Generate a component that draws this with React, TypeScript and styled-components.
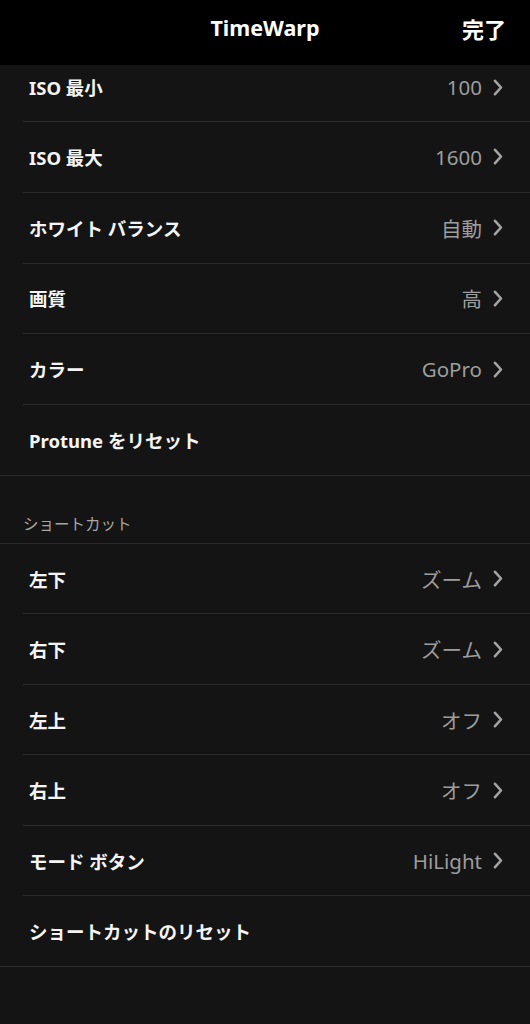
import React from "react";
import styled, { createGlobalStyle } from "styled-components";

const Global = createGlobalStyle`
  html, body { margin: 0; padding: 0; background: #141414; }
  body { font-family: "Noto Sans", "Noto Sans CJK JP", sans-serif; -webkit-font-smoothing: antialiased; }
`;

const Page = styled.div`
  width: 530px;
  min-height: 1024px;
  background: #141414;
  display: flex;
  flex-direction: column;
`;

const Header = styled.header`
  height: 65px;
  background: #000;
  display: grid;
  grid-template-columns: 1fr auto 1fr;
  align-items: center;
  padding: 0 24px 10px;
  box-sizing: border-box;
  color: #fff;
`;

const Title = styled.h1`
  grid-column: 2;
  margin: 0;
  font-size: 21.5px;
  font-weight: 700;
`;

const Done = styled.button`
  grid-column: 3;
  justify-self: end;
  background: none;
  border: none;
  padding: 0;
  color: #fff;
  font-family: inherit;
  font-size: 22px;
  font-weight: 700;
`;

const List = styled.div`
  display: flex;
  flex-direction: column;
`;

const Row = styled.div<{ $clipped?: boolean; $full?: boolean; $height: number }>`
  height: ${(p) => (p.$clipped ? "57px" : `${p.$height}px`)};
  flex-shrink: 0;
  padding-bottom: ${(p) => (p.$clipped ? "12px" : "0")};
  box-sizing: border-box;
  display: flex;
  align-items: center;
  margin-left: ${(p) => (p.$full ? "0" : "23px")};
  padding-left: ${(p) => (p.$full ? "29px" : "6px")};
  padding-right: 27px;
  border-bottom: 1px solid #2a2a2a;
`;

const Label = styled.span`
  flex: 1;
  color: #f4f4f4;
  font-size: 18.5px;
  font-weight: 700;
`;

const Value = styled.span`
  color: #9d9d9d;
  font-size: 20.5px;
  font-weight: 400;
  margin-right: 11px;
`;

const SectionHeader = styled.div`
  height: 68px;
  flex-shrink: 0;
  box-sizing: border-box;
  display: flex;
  align-items: flex-end;
  padding: 0 0 8px 23px;
  color: #a6a6a6;
  font-size: 15.5px;
  border-bottom: 1px solid #2a2a2a;
`;

const Chevron = () => (
  <svg width="10" height="17" viewBox="0 0 10 17" fill="none">
    <path d="M2 1.8 L8 8.5 L2 15.2" stroke="#a3a3a3" strokeWidth="2.6" strokeLinecap="round" strokeLinejoin="round" />
  </svg>
);

type Item = { label: string; value?: string };

const protune: Item[] = [
  { label: "ISO 最大", value: "1600" },
  { label: "ホワイト バランス", value: "自動" },
  { label: "画質", value: "高" },
  { label: "カラー", value: "GoPro" },
];

const shortcuts: Item[] = [
  { label: "左下", value: "ズーム" },
  { label: "右下", value: "ズーム" },
  { label: "左上", value: "オフ" },
  { label: "右上", value: "オフ" },
  { label: "モード ボタン", value: "HiLight" },
];

const SettingRow = ({
  item,
  clipped,
  full,
  height = 70.8,
}: {
  item: Item;
  clipped?: boolean;
  full?: boolean;
  height?: number;
}) => (
  <Row $clipped={clipped} $full={full} $height={height}>
    <Label>{item.label}</Label>
    {item.value && (
      <>
        <Value>{item.value}</Value>
        <Chevron />
      </>
    )}
  </Row>
);

export default function App() {
  return (
    <Page>
      <Global />
      <Header>
        <Title>TimeWarp</Title>
        <Done>完了</Done>
      </Header>
      <List>
        <SettingRow item={{ label: "ISO 最小", value: "100" }} clipped />
        {protune.map((it) => (
          <SettingRow key={it.label} item={it} />
        ))}
        <SettingRow item={{ label: "Protune をリセット" }} full />
      </List>
      <SectionHeader>ショートカット</SectionHeader>
      <List>
        {shortcuts.map((it) => (
          <SettingRow key={it.label} item={it} height={70.5} />
        ))}
        <SettingRow item={{ label: "ショートカットのリセット" }} full height={70.5} />
      </List>
    </Page>
  );
}
